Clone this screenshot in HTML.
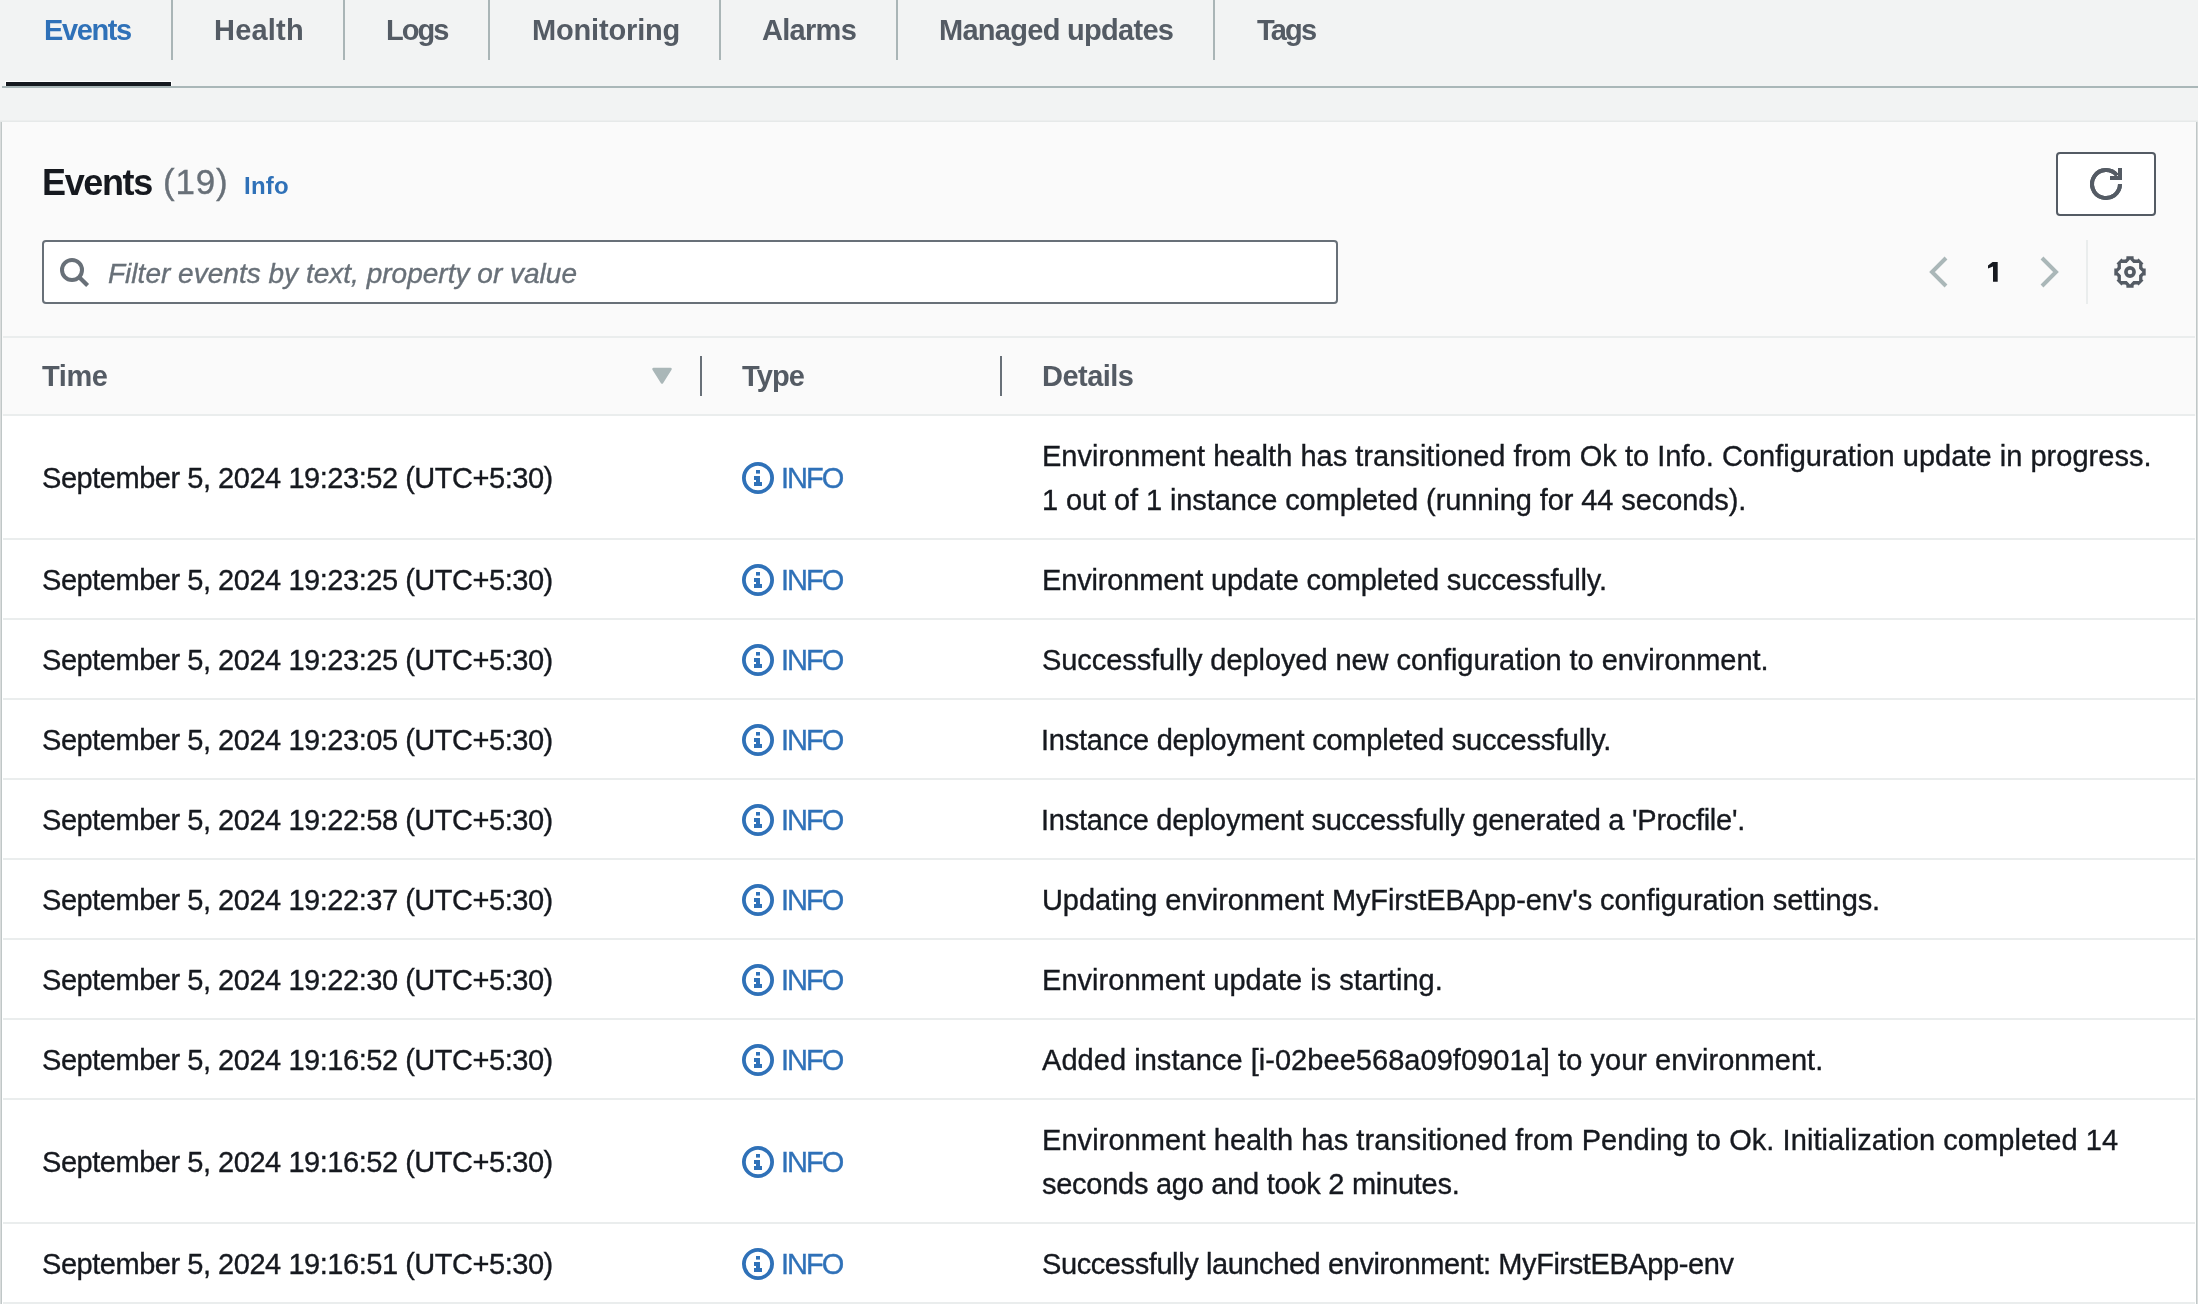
<!DOCTYPE html><html><head><meta charset="utf-8"><style>
html,body{margin:0;padding:0;}
body{width:2198px;height:1304px;overflow:hidden;position:relative;background:#f2f3f3;font-family:"Liberation Sans",sans-serif;}
.t{position:absolute;white-space:nowrap;will-change:transform;}
.r{-webkit-text-stroke:0.35px currentColor;}
.a{position:absolute;}
</style></head><body>
<div class="a" style="left:171px;top:0;width:2px;height:60px;background:#aab5b6"></div>
<div class="a" style="left:343px;top:0;width:2px;height:60px;background:#aab5b6"></div>
<div class="a" style="left:488px;top:0;width:2px;height:60px;background:#aab5b6"></div>
<div class="a" style="left:719px;top:0;width:2px;height:60px;background:#aab5b6"></div>
<div class="a" style="left:896px;top:0;width:2px;height:60px;background:#aab5b6"></div>
<div class="a" style="left:1213px;top:0;width:2px;height:60px;background:#aab5b6"></div>
<div class="a" style="left:5px;top:81px;width:167px;height:5px;background:#ffffff"></div>
<div class="a" style="left:6px;top:82px;width:165px;height:4px;background:#16191f"></div>
<div class="a" style="left:2px;top:86px;width:2196px;height:2px;background:#aab7b8"></div>
<div class="a" style="left:0;top:120px;width:2198px;height:2px;background:#eceeee"></div>
<div class="a" style="left:0;top:121px;width:2198px;height:1px;background:#e6e9e9"></div>
<div class="a" style="left:0;top:122px;width:2198px;height:294px;background:#fafafa"></div>
<div class="a" style="left:0;top:416px;width:2198px;height:888px;background:#ffffff"></div>
<div class="a" style="left:0;top:122px;width:1px;height:1182px;background:#d9dcdc"></div>
<div class="a" style="left:1px;top:122px;width:1px;height:1182px;background:#c0c7c7"></div>
<div class="a" style="left:2196px;top:122px;width:1px;height:1182px;background:#c0c7c7"></div>
<div class="a" style="left:2197px;top:122px;width:1px;height:1182px;background:#d9dcdc"></div>
<div class="a" style="left:2056px;top:152px;width:96px;height:60px;border:2px solid #545b64;border-radius:4px;background:#fff"></div>
<svg class="a" style="left:0;top:0" width="2198" height="1304" viewBox="0 0 2198 1304"><path d="M2120 184 A14 14 0 1 1 2117.03 175.38" fill="none" stroke="#545b64" stroke-width="4"/><path d="M2110 178 H2120 V168" fill="none" stroke="#545b64" stroke-width="4" stroke-linejoin="miter"/><circle cx="72" cy="270" r="10" fill="none" stroke="#687078" stroke-width="4"/><path d="M79.5 277.5 L87.6 285.6" stroke="#687078" stroke-width="4.2"/><path d="M1946 258 L1932 272 L1946 286" fill="none" stroke="#aab7b8" stroke-width="4"/><path d="M2042 258 L2056 272 L2042 286" fill="none" stroke="#aab7b8" stroke-width="4"/><path d="M2126.40 256.30 L2133.60 256.30 L2133.60 258.53 L2134.67 259.60 L2137.50 259.60 L2138.58 258.52 L2143.48 263.42 L2142.40 264.50 L2142.40 267.33 L2143.47 268.40 L2145.70 268.40 L2145.70 275.60 L2143.47 275.60 L2142.40 276.67 L2142.40 279.50 L2143.48 280.58 L2138.58 285.48 L2137.50 284.40 L2134.67 284.40 L2133.60 285.47 L2133.60 287.70 L2126.40 287.70 L2126.40 285.47 L2125.33 284.40 L2122.50 284.40 L2121.42 285.48 L2116.52 280.58 L2117.60 279.50 L2117.60 276.67 L2116.53 275.60 L2114.30 275.60 L2114.30 268.40 L2116.53 268.40 L2117.60 267.33 L2117.60 264.50 L2116.52 263.42 L2121.42 258.52 L2122.50 259.60 L2125.33 259.60 L2126.40 258.53 Z M2130.00 259.60 L2133.30 262.90 L2139.10 262.90 L2139.10 268.70 L2142.40 272.00 L2139.10 275.30 L2139.10 281.10 L2133.30 281.10 L2130.00 284.40 L2126.70 281.10 L2120.90 281.10 L2120.90 275.30 L2117.60 272.00 L2120.90 268.70 L2120.90 262.90 L2126.70 262.90 Z" fill="#545b64" fill-rule="evenodd"/><circle cx="2130" cy="272" r="4.1" fill="none" stroke="#545b64" stroke-width="3.6"/><path d="M1988 265.6 L1992.6 262.1 L1997.7 262.1 L1997.7 281.8 L1993 281.8 L1993 266.6 L1988 268.4 Z" fill="#16191f"/><path d="M653.5 369 L670.5 369 L662 382.5 Z" fill="#aab7b8" stroke="#aab7b8" stroke-width="2.5" stroke-linejoin="round"/>
<circle cx="758" cy="478" r="14.1" fill="none" stroke="#2f71b8" stroke-width="3.8"/><rect x="756" y="470" width="4" height="3.6" fill="#2f71b8"/><rect x="756" y="476" width="4" height="10" fill="#2f71b8"/><rect x="754" y="476" width="3" height="4" fill="#2f71b8"/><rect x="754" y="482" width="8" height="4" fill="#2f71b8"/>
<circle cx="758" cy="580" r="14.1" fill="none" stroke="#2f71b8" stroke-width="3.8"/><rect x="756" y="572" width="4" height="3.6" fill="#2f71b8"/><rect x="756" y="578" width="4" height="10" fill="#2f71b8"/><rect x="754" y="578" width="3" height="4" fill="#2f71b8"/><rect x="754" y="584" width="8" height="4" fill="#2f71b8"/>
<circle cx="758" cy="660" r="14.1" fill="none" stroke="#2f71b8" stroke-width="3.8"/><rect x="756" y="652" width="4" height="3.6" fill="#2f71b8"/><rect x="756" y="658" width="4" height="10" fill="#2f71b8"/><rect x="754" y="658" width="3" height="4" fill="#2f71b8"/><rect x="754" y="664" width="8" height="4" fill="#2f71b8"/>
<circle cx="758" cy="740" r="14.1" fill="none" stroke="#2f71b8" stroke-width="3.8"/><rect x="756" y="732" width="4" height="3.6" fill="#2f71b8"/><rect x="756" y="738" width="4" height="10" fill="#2f71b8"/><rect x="754" y="738" width="3" height="4" fill="#2f71b8"/><rect x="754" y="744" width="8" height="4" fill="#2f71b8"/>
<circle cx="758" cy="820" r="14.1" fill="none" stroke="#2f71b8" stroke-width="3.8"/><rect x="756" y="812" width="4" height="3.6" fill="#2f71b8"/><rect x="756" y="818" width="4" height="10" fill="#2f71b8"/><rect x="754" y="818" width="3" height="4" fill="#2f71b8"/><rect x="754" y="824" width="8" height="4" fill="#2f71b8"/>
<circle cx="758" cy="900" r="14.1" fill="none" stroke="#2f71b8" stroke-width="3.8"/><rect x="756" y="892" width="4" height="3.6" fill="#2f71b8"/><rect x="756" y="898" width="4" height="10" fill="#2f71b8"/><rect x="754" y="898" width="3" height="4" fill="#2f71b8"/><rect x="754" y="904" width="8" height="4" fill="#2f71b8"/>
<circle cx="758" cy="980" r="14.1" fill="none" stroke="#2f71b8" stroke-width="3.8"/><rect x="756" y="972" width="4" height="3.6" fill="#2f71b8"/><rect x="756" y="978" width="4" height="10" fill="#2f71b8"/><rect x="754" y="978" width="3" height="4" fill="#2f71b8"/><rect x="754" y="984" width="8" height="4" fill="#2f71b8"/>
<circle cx="758" cy="1060" r="14.1" fill="none" stroke="#2f71b8" stroke-width="3.8"/><rect x="756" y="1052" width="4" height="3.6" fill="#2f71b8"/><rect x="756" y="1058" width="4" height="10" fill="#2f71b8"/><rect x="754" y="1058" width="3" height="4" fill="#2f71b8"/><rect x="754" y="1064" width="8" height="4" fill="#2f71b8"/>
<circle cx="758" cy="1162" r="14.1" fill="none" stroke="#2f71b8" stroke-width="3.8"/><rect x="756" y="1154" width="4" height="3.6" fill="#2f71b8"/><rect x="756" y="1160" width="4" height="10" fill="#2f71b8"/><rect x="754" y="1160" width="3" height="4" fill="#2f71b8"/><rect x="754" y="1166" width="8" height="4" fill="#2f71b8"/>
<circle cx="758" cy="1264" r="14.1" fill="none" stroke="#2f71b8" stroke-width="3.8"/><rect x="756" y="1256" width="4" height="3.6" fill="#2f71b8"/><rect x="756" y="1262" width="4" height="10" fill="#2f71b8"/><rect x="754" y="1262" width="3" height="4" fill="#2f71b8"/><rect x="754" y="1268" width="8" height="4" fill="#2f71b8"/>
</svg>
<div class="a" style="left:42px;top:240px;width:1292px;height:60px;border:2px solid #687078;border-radius:4px;background:#fff"></div>
<svg class="a" style="left:42px;top:240px" width="80" height="64" viewBox="42 240 80 64"><circle cx="72" cy="270" r="10" fill="none" stroke="#687078" stroke-width="4"/><path d="M79.5 277.5 L87.6 285.6" stroke="#687078" stroke-width="4.2"/></svg>
<svg class="a" style="left:2056px;top:152px" width="100" height="64" viewBox="2056 152 100 64"><path d="M2120 184 A14 14 0 1 1 2117.03 175.38" fill="none" stroke="#545b64" stroke-width="4"/><path d="M2110 178 H2120 V168" fill="none" stroke="#545b64" stroke-width="4" stroke-linejoin="miter"/></svg>
<div class="a" style="left:2086px;top:240px;width:2px;height:64px;background:#eaeded"></div>
<div class="a" style="left:3px;top:336px;width:2192px;height:2px;background:#eaeded"></div>
<div class="a" style="left:3px;top:414px;width:2192px;height:2px;background:#eaeded"></div>
<div class="a" style="left:3px;top:538px;width:2192px;height:2px;background:#eaeded"></div>
<div class="a" style="left:3px;top:618px;width:2192px;height:2px;background:#eaeded"></div>
<div class="a" style="left:3px;top:698px;width:2192px;height:2px;background:#eaeded"></div>
<div class="a" style="left:3px;top:778px;width:2192px;height:2px;background:#eaeded"></div>
<div class="a" style="left:3px;top:858px;width:2192px;height:2px;background:#eaeded"></div>
<div class="a" style="left:3px;top:938px;width:2192px;height:2px;background:#eaeded"></div>
<div class="a" style="left:3px;top:1018px;width:2192px;height:2px;background:#eaeded"></div>
<div class="a" style="left:3px;top:1098px;width:2192px;height:2px;background:#eaeded"></div>
<div class="a" style="left:3px;top:1222px;width:2192px;height:2px;background:#eaeded"></div>
<div class="a" style="left:3px;top:1302px;width:2192px;height:2px;background:#eaeded"></div>
<div class="a" style="left:700px;top:356px;width:2px;height:40px;background:#687078"></div>
<div class="a" style="left:1000px;top:356px;width:2px;height:40px;background:#687078"></div>
<div class="t" id="t0" style="left:44.06px;top:11.95px;font-size:29px;line-height:36px;font-weight:700;font-style:normal;color:#2f71b8;letter-spacing:-1.400px;">Events</div>
<div class="t" id="t1" style="left:214.06px;top:11.95px;font-size:29px;line-height:36px;font-weight:700;font-style:normal;color:#545b64;letter-spacing:0.200px;">Health</div>
<div class="t" id="t2" style="left:386.06px;top:11.95px;font-size:29px;line-height:36px;font-weight:700;font-style:normal;color:#545b64;letter-spacing:-2.000px;">Logs</div>
<div class="t" id="t3" style="left:531.56px;top:11.95px;font-size:29px;line-height:36px;font-weight:700;font-style:normal;color:#545b64;letter-spacing:-0.167px;">Monitoring</div>
<div class="t" id="t4" style="left:762.28px;top:11.95px;font-size:29px;line-height:36px;font-weight:700;font-style:normal;color:#545b64;letter-spacing:-0.700px;">Alarms</div>
<div class="t" id="t5" style="left:939.06px;top:11.95px;font-size:29px;line-height:36px;font-weight:700;font-style:normal;color:#545b64;letter-spacing:-0.714px;">Managed updates</div>
<div class="t" id="t6" style="left:1257.17px;top:11.95px;font-size:29px;line-height:36px;font-weight:700;font-style:normal;color:#545b64;letter-spacing:-1.833px;">Tags</div>
<div class="t" id="t7" style="left:41.89px;top:160.02px;font-size:36px;line-height:45px;font-weight:700;font-style:normal;color:#16191f;letter-spacing:-1.380px;">Events</div>
<div class="t r" id="t8" style="left:162.83px;top:159.57px;font-size:35px;line-height:44px;font-weight:400;font-style:normal;color:#687078;letter-spacing:0.767px;">(19)</div>
<div class="t" id="t9" style="left:243.59px;top:171.38px;font-size:24px;line-height:30px;font-weight:700;font-style:normal;color:#2f71b8;letter-spacing:0.267px;">Info</div>
<div class="t r" id="t10" style="left:108.14px;top:255.79px;font-size:28px;line-height:35px;font-weight:400;font-style:italic;color:#687078;letter-spacing:0.015px;">Filter events by text, property or value</div>
<div class="t" id="t11" style="left:41.67px;top:357.95px;font-size:29px;line-height:36px;font-weight:700;font-style:normal;color:#545b64;letter-spacing:-0.433px;">Time</div>
<div class="t" id="t12" style="left:741.67px;top:357.95px;font-size:29px;line-height:36px;font-weight:700;font-style:normal;color:#545b64;letter-spacing:-0.900px;">Type</div>
<div class="t" id="t13" style="left:1041.96px;top:357.95px;font-size:29px;line-height:36px;font-weight:700;font-style:normal;color:#545b64;letter-spacing:-0.533px;">Details</div>
<div class="t r" id="t14" style="left:41.88px;top:459.95px;font-size:29px;line-height:36px;font-weight:400;font-style:normal;color:#16191f;letter-spacing:-0.464px;">September 5, 2024 19:23:52 (UTC+5:30)</div>
<div class="t r" id="t15" style="left:781.32px;top:459.95px;font-size:29px;line-height:36px;font-weight:400;font-style:normal;color:#2f71b8;letter-spacing:-2.000px;">INFO</div>
<div class="t r" id="t16" style="left:1041.62px;top:437.95px;font-size:29px;line-height:36px;font-weight:400;font-style:normal;color:#16191f;letter-spacing:0.024px;">Environment health has transitioned from Ok to Info. Configuration update in progress.</div>
<div class="t r" id="t17" style="left:1042.39px;top:481.95px;font-size:29px;line-height:36px;font-weight:400;font-style:normal;color:#16191f;letter-spacing:-0.093px;">1 out of 1 instance completed (running for 44 seconds).</div>
<div class="t r" id="t18" style="left:41.88px;top:561.95px;font-size:29px;line-height:36px;font-weight:400;font-style:normal;color:#16191f;letter-spacing:-0.464px;">September 5, 2024 19:23:25 (UTC+5:30)</div>
<div class="t r" id="t19" style="left:781.32px;top:561.95px;font-size:29px;line-height:36px;font-weight:400;font-style:normal;color:#2f71b8;letter-spacing:-2.000px;">INFO</div>
<div class="t r" id="t20" style="left:1041.62px;top:561.95px;font-size:29px;line-height:36px;font-weight:400;font-style:normal;color:#16191f;letter-spacing:-0.161px;">Environment update completed successfully.</div>
<div class="t r" id="t21" style="left:41.88px;top:641.95px;font-size:29px;line-height:36px;font-weight:400;font-style:normal;color:#16191f;letter-spacing:-0.464px;">September 5, 2024 19:23:25 (UTC+5:30)</div>
<div class="t r" id="t22" style="left:781.32px;top:641.95px;font-size:29px;line-height:36px;font-weight:400;font-style:normal;color:#2f71b8;letter-spacing:-2.000px;">INFO</div>
<div class="t r" id="t23" style="left:1041.88px;top:641.95px;font-size:29px;line-height:36px;font-weight:400;font-style:normal;color:#16191f;letter-spacing:-0.069px;">Successfully deployed new configuration to environment.</div>
<div class="t r" id="t24" style="left:41.88px;top:721.95px;font-size:29px;line-height:36px;font-weight:400;font-style:normal;color:#16191f;letter-spacing:-0.464px;">September 5, 2024 19:23:05 (UTC+5:30)</div>
<div class="t r" id="t25" style="left:781.32px;top:721.95px;font-size:29px;line-height:36px;font-weight:400;font-style:normal;color:#2f71b8;letter-spacing:-2.000px;">INFO</div>
<div class="t r" id="t26" style="left:1041.42px;top:721.95px;font-size:29px;line-height:36px;font-weight:400;font-style:normal;color:#16191f;letter-spacing:-0.224px;">Instance deployment completed successfully.</div>
<div class="t r" id="t27" style="left:41.88px;top:801.95px;font-size:29px;line-height:36px;font-weight:400;font-style:normal;color:#16191f;letter-spacing:-0.464px;">September 5, 2024 19:22:58 (UTC+5:30)</div>
<div class="t r" id="t28" style="left:781.32px;top:801.95px;font-size:29px;line-height:36px;font-weight:400;font-style:normal;color:#2f71b8;letter-spacing:-2.000px;">INFO</div>
<div class="t r" id="t29" style="left:1041.42px;top:801.95px;font-size:29px;line-height:36px;font-weight:400;font-style:normal;color:#16191f;letter-spacing:-0.264px;">Instance deployment successfully generated a 'Procfile'.</div>
<div class="t r" id="t30" style="left:41.88px;top:881.95px;font-size:29px;line-height:36px;font-weight:400;font-style:normal;color:#16191f;letter-spacing:-0.464px;">September 5, 2024 19:22:37 (UTC+5:30)</div>
<div class="t r" id="t31" style="left:781.32px;top:881.95px;font-size:29px;line-height:36px;font-weight:400;font-style:normal;color:#2f71b8;letter-spacing:-2.000px;">INFO</div>
<div class="t r" id="t32" style="left:1041.86px;top:881.95px;font-size:29px;line-height:36px;font-weight:400;font-style:normal;color:#16191f;letter-spacing:-0.090px;">Updating environment MyFirstEBApp-env's configuration settings.</div>
<div class="t r" id="t33" style="left:41.88px;top:961.95px;font-size:29px;line-height:36px;font-weight:400;font-style:normal;color:#16191f;letter-spacing:-0.464px;">September 5, 2024 19:22:30 (UTC+5:30)</div>
<div class="t r" id="t34" style="left:781.32px;top:961.95px;font-size:29px;line-height:36px;font-weight:400;font-style:normal;color:#2f71b8;letter-spacing:-2.000px;">INFO</div>
<div class="t r" id="t35" style="left:1041.62px;top:961.95px;font-size:29px;line-height:36px;font-weight:400;font-style:normal;color:#16191f;letter-spacing:0.033px;">Environment update is starting.</div>
<div class="t r" id="t36" style="left:41.88px;top:1041.95px;font-size:29px;line-height:36px;font-weight:400;font-style:normal;color:#16191f;letter-spacing:-0.464px;">September 5, 2024 19:16:52 (UTC+5:30)</div>
<div class="t r" id="t37" style="left:781.32px;top:1041.95px;font-size:29px;line-height:36px;font-weight:400;font-style:normal;color:#2f71b8;letter-spacing:-2.000px;">INFO</div>
<div class="t r" id="t38" style="left:1041.94px;top:1041.95px;font-size:29px;line-height:36px;font-weight:400;font-style:normal;color:#16191f;letter-spacing:0.045px;">Added instance [i-02bee568a09f0901a] to your environment.</div>
<div class="t r" id="t39" style="left:41.88px;top:1143.95px;font-size:29px;line-height:36px;font-weight:400;font-style:normal;color:#16191f;letter-spacing:-0.464px;">September 5, 2024 19:16:52 (UTC+5:30)</div>
<div class="t r" id="t40" style="left:781.32px;top:1143.95px;font-size:29px;line-height:36px;font-weight:400;font-style:normal;color:#2f71b8;letter-spacing:-2.000px;">INFO</div>
<div class="t r" id="t41" style="left:1041.62px;top:1121.95px;font-size:29px;line-height:36px;font-weight:400;font-style:normal;color:#16191f;letter-spacing:0.070px;">Environment health has transitioned from Pending to Ok. Initialization completed 14</div>
<div class="t r" id="t42" style="left:1042.09px;top:1165.95px;font-size:29px;line-height:36px;font-weight:400;font-style:normal;color:#16191f;letter-spacing:-0.263px;">seconds ago and took 2 minutes.</div>
<div class="t r" id="t43" style="left:41.88px;top:1245.95px;font-size:29px;line-height:36px;font-weight:400;font-style:normal;color:#16191f;letter-spacing:-0.464px;">September 5, 2024 19:16:51 (UTC+5:30)</div>
<div class="t r" id="t44" style="left:781.32px;top:1245.95px;font-size:29px;line-height:36px;font-weight:400;font-style:normal;color:#2f71b8;letter-spacing:-2.000px;">INFO</div>
<div class="t r" id="t45" style="left:1041.88px;top:1245.95px;font-size:29px;line-height:36px;font-weight:400;font-style:normal;color:#16191f;letter-spacing:-0.410px;">Successfully launched environment: MyFirstEBApp-env</div>
</body></html>
